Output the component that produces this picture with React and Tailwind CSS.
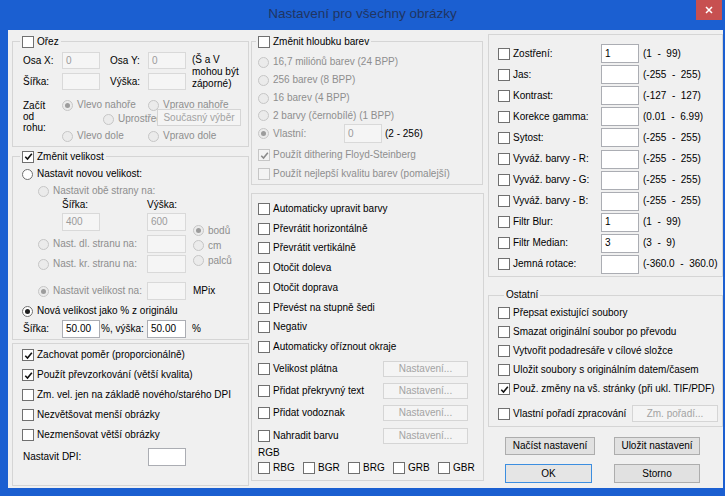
import React from 'react';

// small win8-ish form controls
const Check = ({ checked = false, disabled = false }) => (
  <span
    className={`inline-flex h-[12px] w-[12px] shrink-0 items-center justify-center border ${
      disabled ? 'border-[#c6c6c6] bg-[#f3f3f3]' : 'border-[#707070] bg-white'
    }`}
  >
    {checked && (
      <svg viewBox="0 0 10 10" className="h-[9px] w-[9px]">
        <path d="M1.4 5.2 L3.9 7.8 L8.7 1.9" fill="none" stroke={disabled ? '#8a8a8a' : '#111'} strokeWidth="1.7" />
      </svg>
    )}
  </span>
);

const Radio = ({ checked = false, disabled = false }) => (
  <span
    className={`inline-flex h-[11px] w-[11px] shrink-0 items-center justify-center rounded-full border ${
      disabled ? 'border-[#c6c6c6] bg-[#ebebeb]' : 'border-[#707070] bg-white'
    }`}
  >
    {checked && <span className={`h-[5px] w-[5px] rounded-full ${disabled ? 'bg-[#9c9c9c]' : 'bg-[#1f1f1f]'}`} />}
  </span>
);

const Opt = ({ radio = false, checked = false, disabled = false, className = '', children }) => (
  <div className={`flex shrink-0 items-center ${radio ? 'gap-[4px]' : 'gap-[3px]'} ${className}`}>
    {radio ? <Radio checked={checked} disabled={disabled} /> : <Check checked={checked} disabled={disabled} />}
    <span className={`whitespace-nowrap ${disabled ? 'text-[#8e8e8e]' : ''}`}>{children}</span>
  </div>
);

const Field = ({ value = '', disabled = false, className = '' }) => (
  <div
    className={`flex shrink-0 items-center border px-[3px] ${
      disabled ? 'border-[#d9d9d9] bg-[#f5f5f5] text-[#9b9b9b]' : 'border-[#abadb3] bg-white'
    } ${className}`}
  >
    {value}
  </div>
);

const Btn = ({ children, disabled = false, primary = false, className = '' }) => (
  <div
    className={`flex shrink-0 items-center justify-center whitespace-nowrap border ${
      disabled
        ? 'border-[#d5d5d5] bg-[#f4f4f4] text-[#a3a3a3]'
        : primary
        ? 'border-[#3c8ee0] bg-[#e5e5e5]'
        : 'border-[#adadad] bg-[#e1e1e1]'
    } ${className}`}
  >
    {children}
  </div>
);

const ranges = [
  ['Zostření:', '1', '(1  -  99)'],
  ['Jas:', '', '(-255  -  255)'],
  ['Kontrast:', '', '(-127  -  127)'],
  ['Korekce gamma:', '', '(0.01  -  6.99)'],
  ['Sytost:', '', '(-255  -  255)'],
  ['Vyváž. barvy - R:', '', '(-255  -  255)'],
  ['Vyváž. barvy - G:', '', '(-255  -  255)'],
  ['Vyváž. barvy - B:', '', '(-255  -  255)'],
  ['Filtr Blur:', '1', '(1  -  99)'],
  ['Filtr Median:', '3', '(3  -  9)'],
  ['Jemná rotace:', '', '(-360.0  -  360.0)'],
];

const transforms = [
  'Automaticky upravit barvy',
  'Převrátit horizontálně',
  'Převrátit vertikálně',
  'Otočit doleva',
  'Otočit doprava',
  'Převést na stupně šedi',
  'Negativ',
  'Automaticky oříznout okraje',
];

export default function App() {
  return (
    <div className="flex h-[496px] w-[725px] flex-col overflow-hidden bg-[#1b5fd1] font-['Liberation_Sans',Arial,sans-serif] text-[10px] leading-[12px] text-black">
      {/* title bar */}
      <div className="relative flex h-[30px] shrink-0 items-center justify-center pb-[2px]">
        <span className="text-[13.5px] leading-[16px] text-[#203563]">Nastavení pro všechny obrázky</span>
        <div className="absolute right-[3px] top-0 flex h-[20px] w-[26px] items-center justify-center bg-[#c75050]">
          <svg viewBox="0 0 8 8" className="h-[8px] w-[8px]">
            <path d="M1 1 L7 7 M7 1 L1 7" stroke="#fff" strokeWidth="1.5" />
          </svg>
        </div>
      </div>

      {/* dialog body */}
      <div className="mb-[8px] ml-[8px] mr-[2px] flex flex-1 bg-[#f0f0f0]">
        {/* left column */}
        <div className="ml-[4px] flex w-[237px] flex-col pt-[5px]">
          <fieldset className="h-[112px] border border-[#d5d5d5]">
            <legend className="ml-[7px] px-[2px]">
              <Opt className="h-[13px]">Ořez</Opt>
            </legend>
            <div className="ml-[10px] mt-[4px] flex">
              <div className="flex flex-col gap-[4px]">
                <div className="flex h-[17px] items-center">
                  <span className="w-[39px]">Osa X:</span>
                  <Field disabled value="0" className="h-[17px] w-[38px]" />
                  <span className="ml-[10px] w-[38px]">Osa Y:</span>
                  <Field disabled value="0" className="h-[17px] w-[38px]" />
                </div>
                <div className="flex h-[17px] items-center">
                  <span className="w-[39px]">Šířka:</span>
                  <Field disabled className="h-[17px] w-[38px]" />
                  <span className="ml-[10px] w-[38px]">Výška:</span>
                  <Field disabled className="h-[17px] w-[38px]" />
                </div>
              </div>
              <div className="ml-[6px] mt-[2px]">
                (Š a V<br />
                mohou být<br />
                záporné)
              </div>
            </div>
            <div className="ml-[10px] mt-[9px] flex">
              <div className="w-[39px] pt-[1px] leading-[11px]">
                Začít<br />
                od<br />
                rohu:
              </div>
              <div className="relative w-[180px]">
                <div className="flex h-[12px] items-center">
                  <Opt radio checked disabled className="w-[86px]">Vlevo nahoře</Opt>
                  <Opt radio disabled>Vpravo nahoře</Opt>
                </div>
                <div className="mt-[2px] flex h-[12px] items-center pl-[41px]">
                  <Opt radio disabled>Uprostřed</Opt>
                </div>
                <div className="mt-[5px] flex h-[12px] items-center">
                  <Opt radio disabled className="w-[86px]">Vlevo dole</Opt>
                  <Opt radio disabled>Vpravo dole</Opt>
                </div>
                <Btn disabled className="absolute left-[95px] top-[10px] h-[17px] w-[84px]">Současný výběr</Btn>
              </div>
            </div>
          </fieldset>

          <fieldset className="mt-[3px] h-[190px] border border-[#d5d5d5]">
            <legend className="ml-[7px] px-[2px]">
              <Opt checked className="h-[13px]">Změnit velikost</Opt>
            </legend>
            <div className="ml-[9px]">
              <Opt radio className="mt-[4px] h-[14px]">Nastavit novou velikost:</Opt>
              <div className="ml-[16px]">
                <Opt radio disabled className="mt-[3px] h-[14px]">Nastavit obě strany na:</Opt>
                <div className="flex">
                  <div className="w-[155px]">
                    <div className="flex h-[14px] items-center pl-[24px]">
                      <span className="w-[85px]">Šířka:</span>
                      <span>Výška:</span>
                    </div>
                    <div className="mt-[1px] flex pl-[24px]">
                      <Field disabled value="400" className="h-[18px] w-[38px]" />
                      <Field disabled value="600" className="ml-[47px] h-[18px] w-[39px]" />
                    </div>
                    <div className="mt-[4px] flex items-center">
                      <Opt radio disabled className="w-[109px]">Nast. dl. stranu na:</Opt>
                      <Field disabled className="h-[18px] w-[39px]" />
                    </div>
                    <div className="mt-[2px] flex items-center">
                      <Opt radio disabled className="w-[109px]">Nast. kr. stranu na:</Opt>
                      <Field disabled className="h-[18px] w-[39px]" />
                    </div>
                  </div>
                  <div className="pt-[25px]">
                    <Opt radio checked disabled className="h-[15px]">bodů</Opt>
                    <Opt radio disabled className="h-[15px]">cm</Opt>
                    <Opt radio disabled className="h-[15px]">palců</Opt>
                  </div>
                </div>
                <div className="mt-[9px] flex h-[18px] items-center">
                  <Opt radio checked disabled className="w-[109px]">Nastavit velikost na:</Opt>
                  <Field disabled className="h-[18px] w-[39px]" />
                  <span className="ml-[7px]">MPix</span>
                </div>
              </div>
              <Opt radio checked className="mt-[4px] h-[14px]">Nová velikost jako % z originálu</Opt>
              <div className="ml-[1px] mt-[2px] flex h-[18px] items-center">
                <span className="w-[39px]">Šířka:</span>
                <Field value="50.00" className="h-[18px] w-[38px]" />
                <span className="w-[47px] pl-[1px]">%, výška:</span>
                <Field value="50.00" className="h-[18px] w-[39px]" />
                <span className="ml-[6px]">%</span>
              </div>
            </div>
          </fieldset>

          <fieldset className="mt-[3px] h-[143px] border border-[#d5d5d5]">
            <div className="ml-[9px] pt-[1px]">
              <Opt checked className="h-[20px]">Zachovat poměr (proporcionálně)</Opt>
              <Opt checked className="h-[20px]">Použít převzorkování (větší kvalita)</Opt>
              <Opt className="h-[20px]">Zm. vel. jen na základě nového/starého DPI</Opt>
              <Opt className="h-[20px]">Nezvětšovat menší obrázky</Opt>
              <Opt className="h-[20px]">Nezmenšovat větší obrázky</Opt>
              <div className="ml-[1px] mt-[3px] flex h-[18px] items-center">
                <span className="w-[125px]">Nastavit DPI:</span>
                <Field className="h-[18px] w-[38px]" />
              </div>
            </div>
          </fieldset>
        </div>

        {/* middle column */}
        <div className="ml-[2px] flex w-[232px] flex-col pt-[5px]">
          <fieldset className="h-[150px] border border-[#d5d5d5]">
            <legend className="ml-[4px] px-[2px]">
              <Opt className="h-[13px]">Změnit hloubku barev</Opt>
            </legend>
            <div className="ml-[6px]">
              <Opt radio disabled className="mt-[5px] h-[18px]">16,7 miliónů barev (24 BPP)</Opt>
              <Opt radio disabled className="h-[18px]">256 barev (8 BPP)</Opt>
              <Opt radio disabled className="h-[18px]">16 barev (4 BPP)</Opt>
              <Opt radio disabled className="h-[17px]">2 barvy (černobílé) (1 BPP)</Opt>
              <div className="flex h-[19px] items-center">
                <Opt radio checked disabled className="w-[86px]">Vlastní:</Opt>
                <Field disabled value="0" className="h-[19px] w-[38px]" />
                <span className="ml-[3px]">(2 - 256)</span>
              </div>
              <Opt checked disabled className="mt-[3px] h-[18px]">Použít dithering Floyd-Steinberg</Opt>
              <Opt disabled className="mt-[1px] h-[18px]">Použít nejlepší kvalitu barev (pomalejší)</Opt>
            </div>
          </fieldset>

          <fieldset className="mt-[8px] h-[288px] border border-[#d5d5d5]">
            <div className="ml-[6px] pt-[5px]">
              {transforms.map((t) => (
                <Opt key={t} className="h-[19.75px]">{t}</Opt>
              ))}
              <div className="mt-[4px] flex h-[16px] items-center">
                <Opt className="w-[125px]">Velikost plátna</Opt>
                <Btn disabled className="h-[16px] w-[85px]">Nastavení...</Btn>
              </div>
              <div className="mt-[6px] flex h-[16px] items-center">
                <Opt className="w-[125px]">Přidat překryvný text</Opt>
                <Btn disabled className="h-[16px] w-[85px]">Nastavení...</Btn>
              </div>
              <div className="mt-[6px] flex h-[16px] items-center">
                <Opt className="w-[125px]">Přidat vodoznak</Opt>
                <Btn disabled className="h-[16px] w-[85px]">Nastavení...</Btn>
              </div>
              <div className="mt-[7px] flex h-[16px] items-center">
                <Opt className="w-[125px]">Nahradit barvu</Opt>
                <Btn disabled className="h-[16px] w-[85px]">Nastavení...</Btn>
              </div>
              <div className="mt-[3px] h-[12px]">RGB</div>
              <div className="mt-[3px] flex h-[12px] items-center">
                {['RBG', 'BGR', 'BRG', 'GRB', 'GBR'].map((c) => (
                  <Opt key={c} className="w-[45px]">{c}</Opt>
                ))}
              </div>
            </div>
          </fieldset>
        </div>

        {/* right column */}
        <div className="ml-[5px] flex w-[235px] flex-col pt-[4px]">
          <fieldset className="h-[243px] border border-[#d5d5d5]">
            <div className="ml-[9px] pt-[8px]">
              {ranges.map(([label, val, range]) => (
                <div key={label} className="flex h-[21.1px] items-center">
                  <Opt className="w-[103px]">{label}</Opt>
                  <Field value={val} className="h-[19px] w-[38px]" />
                  <span className="ml-[4px] whitespace-pre">{range}</span>
                </div>
              ))}
            </div>
          </fieldset>

          <fieldset className="mt-[11px] h-[139px] border border-[#d5d5d5]">
            <legend className="ml-[15px] px-[2px] leading-[14px]">Ostatní</legend>
            <div className="ml-[9px] pt-[1.5px]">
              <Opt className="h-[19px]">Přepsat existující soubory</Opt>
              <Opt className="h-[19px]">Smazat originální soubor po převodu</Opt>
              <Opt className="h-[19px]">Vytvořit podadresáře v cílové složce</Opt>
              <Opt className="h-[19px]">Uložit soubory s originálním datem/časem</Opt>
              <Opt checked className="h-[19px]">Použ. změny na vš. stránky (při ukl. TIF/PDF)</Opt>
              <div className="mt-[6.5px] flex h-[17px] items-center">
                <Opt className="w-[134px]">Vlastní pořadí zpracování</Opt>
                <Btn disabled className="h-[17px] w-[86px]">Zm. pořadí...</Btn>
              </div>
            </div>
          </fieldset>

          <div className="mt-[10px] flex">
            <Btn className="ml-[17px] h-[18px] w-[90px]">Načíst nastavení</Btn>
            <Btn className="ml-[19px] h-[18px] w-[86px]">Uložit nastavení</Btn>
          </div>
          <div className="mt-[9px] flex">
            <Btn primary className="ml-[17px] h-[19px] w-[87px]">OK</Btn>
            <Btn className="ml-[22px] h-[19px] w-[86px]">Storno</Btn>
          </div>
        </div>
      </div>
    </div>
  );
}
